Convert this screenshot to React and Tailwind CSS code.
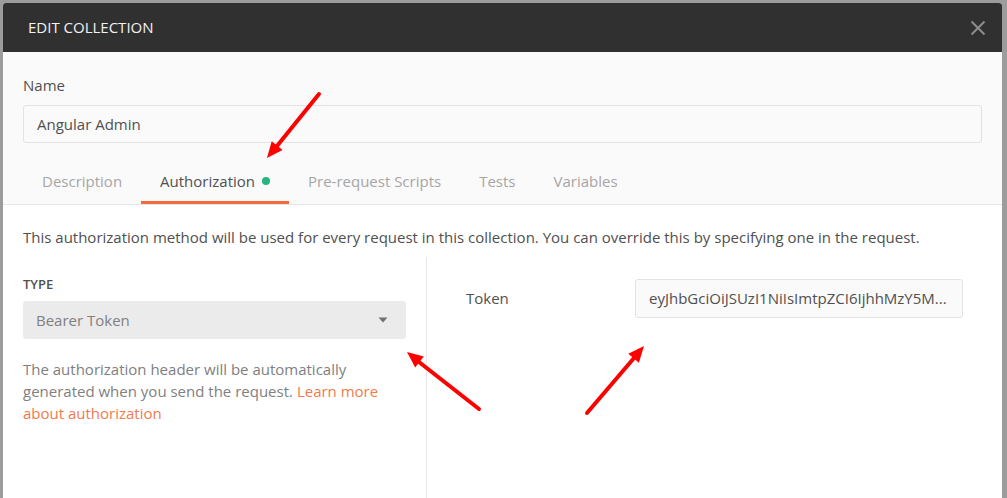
import React from "react";

const tabs = [
  { label: "Description" },
  { label: "Authorization", active: true, dot: true },
  { label: "Pre-request Scripts" },
  { label: "Tests" },
  { label: "Variables" },
];

const Arrows = () => (
  <svg
    className="absolute inset-0 pointer-events-none"
    width="1007"
    height="498"
    viewBox="0 0 1007 498"
  >
    <g stroke="#ff0000" strokeWidth="4" strokeLinecap="round" fill="none">
      <line x1="319" y1="94" x2="277" y2="146" />
      <line x1="479" y1="409" x2="419" y2="362" />
      <line x1="587" y1="413" x2="634" y2="358" />
    </g>
    <g fill="#ff0000">
      <polygon points="267,158 282.5,150 277,145.5 271.7,141.2" />
      <polygon points="407,352 423.8,356.4 419.5,362 415.2,367.4" />
      <polygon points="644,346 638.9,362.7 633.6,358.2 628.3,353.7" />
    </g>
  </svg>
);

const App = () => {
  return (
    <div className="relative h-[498px] w-[1007px] overflow-hidden bg-[#9c9c9c] pl-[3px] pt-[3px] font-['Open_Sans',sans-serif]">
      <div className="flex h-[540px] w-[999px] flex-col overflow-hidden rounded-t-[3px] bg-white">
        <header className="flex h-[49px] shrink-0 items-center justify-between bg-[#303030] pl-[25px] pr-[16px]">
          <h1 className="text-[15px] text-[#f2f2f2]">EDIT COLLECTION</h1>
          <svg width="16" height="16" viewBox="0 0 16 16">
            <path
              d="M1.5 1.5 L14.5 14.5 M14.5 1.5 L1.5 14.5"
              stroke="#8c8c8c"
              strokeWidth="2"
            />
          </svg>
        </header>

        <div className="bg-[#fafafa] px-[20px] pt-[23px]">
          <div className="text-[15px] leading-[20px] text-[#505050]">Name</div>
          <div className="mt-[10px] flex h-[38px] items-center rounded-[3px] border border-[#e3e3e3] bg-[#fafafa] px-[13px] text-[15px] text-[#505050]">
            Angular Admin
          </div>
          <nav className="-mx-[20px] mt-[18px] flex border-b border-[#e6e6e6] px-[20px]">
            {tabs.map((tab) => (
              <div
                key={tab.label}
                className={
                  tab.active
                    ? "flex items-center border-b-[3px] border-[#f26b3a] px-[19px] pb-[10px] pt-[10px] text-[15px] leading-[20px] text-[#505050]"
                    : "flex items-center border-b-[3px] border-transparent px-[19px] pb-[10px] pt-[10px] text-[15px] leading-[20px] text-[#a6a6a6]"
                }
              >
                {tab.label}
                {tab.dot && (
                  <span className="ml-[7px] inline-block h-[8px] w-[8px] rounded-full bg-[#26b47f]" />
                )}
              </div>
            ))}
          </nav>
        </div>

        <div className="flex flex-1 flex-col bg-white">
          <p className="px-[20px] pt-[22px] text-[15px] leading-[20px] text-[#505050]">
            This authorization method will be used for every request in this
            collection. You can override this by specifying one in the request.
          </p>
          <div className="mt-[10px] flex flex-1">
            <div className="w-[424px] shrink-0 border-r border-[#e6e6e6] pl-[20px] pr-[20px] pt-[18px]">
              <div className="text-[13px] font-semibold leading-[18px] text-[#505050]">
                TYPE
              </div>
              <div className="mt-[8px] flex h-[38px] items-center justify-between rounded-[3px] bg-[#ebebeb] pl-[13px] pr-[18px] text-[15px] text-[#808080]">
                Bearer Token
                <svg width="10" height="6" viewBox="0 0 10 6">
                  <path d="M0.5 0.5 L9.5 0.5 L5 5.5 Z" fill="#707070" />
                </svg>
              </div>
              <p className="mt-[19px] text-[15px] leading-[22px] text-[#808080]">
                The authorization header will be automatically generated when
                you send the request.{" "}
                <span className="text-[#f37a4e]">
                  Learn more about authorization
                </span>
              </p>
            </div>
            <div className="flex flex-1 items-start pl-[39px] pr-[39px] pt-[22px]">
              <div className="flex h-[38px] w-[169px] shrink-0 items-center text-[15px] text-[#505050]">
                Token
              </div>
              <div className="flex h-[39px] w-[328px] items-center rounded-[3px] border border-[#e3e3e3] bg-[#fafafa] px-[13px] text-[15px] text-[#505050]">
                <span className="truncate">
                  eyJhbGciOiJSUzI1NiIsImtpZCI6IjhhMzY5M...
                </span>
              </div>
            </div>
          </div>
        </div>
      </div>
      <Arrows />
    </div>
  );
};

export default App;
